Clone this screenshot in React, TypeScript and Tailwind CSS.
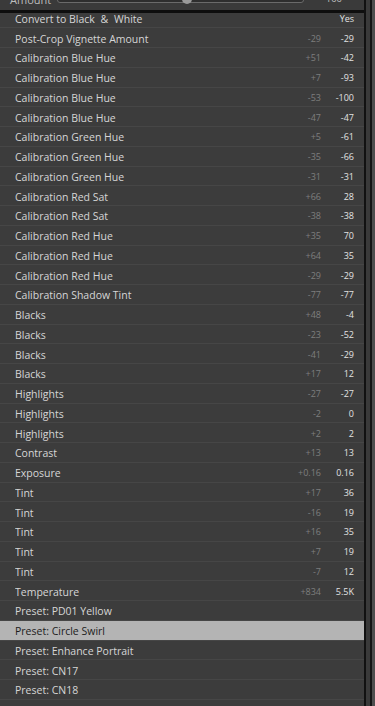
import React from 'react'

type Row = { label: React.ReactNode; delta?: string; value?: string; selected?: boolean }

const rows: Row[] = [
  { label: <>Convert to Black <span className="mx-[3px]">&amp;</span> White</>, value: 'Yes' },
  { label: 'Post-Crop Vignette Amount', delta: '-29', value: '-29' },
  { label: 'Calibration Blue Hue', delta: '+51', value: '-42' },
  { label: 'Calibration Blue Hue', delta: '+7', value: '-93' },
  { label: 'Calibration Blue Hue', delta: '-53', value: '-100' },
  { label: 'Calibration Blue Hue', delta: '-47', value: '-47' },
  { label: 'Calibration Green Hue', delta: '+5', value: '-61' },
  { label: 'Calibration Green Hue', delta: '-35', value: '-66' },
  { label: 'Calibration Green Hue', delta: '-31', value: '-31' },
  { label: 'Calibration Red Sat', delta: '+66', value: '28' },
  { label: 'Calibration Red Sat', delta: '-38', value: '-38' },
  { label: 'Calibration Red Hue', delta: '+35', value: '70' },
  { label: 'Calibration Red Hue', delta: '+64', value: '35' },
  { label: 'Calibration Red Hue', delta: '-29', value: '-29' },
  { label: 'Calibration Shadow Tint', delta: '-77', value: '-77' },
  { label: 'Blacks', delta: '+48', value: '-4' },
  { label: 'Blacks', delta: '-23', value: '-52' },
  { label: 'Blacks', delta: '-41', value: '-29' },
  { label: 'Blacks', delta: '+17', value: '12' },
  { label: 'Highlights', delta: '-27', value: '-27' },
  { label: 'Highlights', delta: '-2', value: '0' },
  { label: 'Highlights', delta: '+2', value: '2' },
  { label: 'Contrast', delta: '+13', value: '13' },
  { label: 'Exposure', delta: '+0.16', value: '0.16' },
  { label: 'Tint', delta: '+17', value: '36' },
  { label: 'Tint', delta: '-16', value: '19' },
  { label: 'Tint', delta: '+16', value: '35' },
  { label: 'Tint', delta: '+7', value: '19' },
  { label: 'Tint', delta: '-7', value: '12' },
  { label: 'Temperature', delta: '+834', value: '5.5K' },
  { label: 'Preset: PD01 Yellow' },
  { label: 'Preset: Circle Swirl', selected: true },
  { label: 'Preset: Enhance Portrait' },
  { label: 'Preset: CN17' },
  { label: 'Preset: CN18' },
  { label: '' },
]

function HistoryRow({ row }: { row: Row }) {
  return (
    <div
      className={`flex h-[19.76px] items-center border-b border-[#464646] pl-[15px] pr-[10px] pt-[2px] ${
        row.selected ? 'bg-[#b4b4b4] text-[#1c1c1c]' : 'text-[#d6d6d6]'
      }`}
    >
      <span className="flex-1 truncate text-[10.5px] leading-[14px]">{row.label}</span>
      {row.delta && (
        <span className="w-[40px] text-right text-[9px] leading-[12px] text-[#7e7e7e]">{row.delta}</span>
      )}
      {row.value && (
        <span className="w-[33px] text-right text-[9px] leading-[12px] text-[#e2e2e2]">{row.value}</span>
      )}
    </div>
  )
}

export default function App() {
  return (
    <div
      className="flex h-[706px] w-[375px] overflow-hidden bg-[#3c3c3c]"
      style={{ fontFamily: '"Open Sans", "Noto Sans", sans-serif' }}
    >
      <div className="flex w-[364px] flex-col">
        {/* Amount slider, scrolled mostly out of view */}
        <div className="h-[10px] overflow-hidden bg-[#3a3a3a]">
          <div className="-mt-[8px] flex h-[14px] items-center pl-[10px] pr-[22px]">
            <span className="w-[47px] text-[11px] leading-none text-[#bdbdbd]">Amount</span>
            <div className="relative h-[8px] flex-1 rounded-[3px] border border-[#6a6a6a] bg-[#2e2e2e]">
              <div className="absolute left-[124px] top-[-3px] h-[11px] w-[10px] rounded-full bg-[#9a9a9a]" />
            </div>
            <span className="w-[38px] text-right text-[9.5px] leading-none text-[#bdbdbd]">100</span>
          </div>
        </div>
        <div className="h-[3px] bg-[#0e0e0e]" />
        <div className="flex-1 overflow-hidden">
          <div className="-mt-[4.5px]">
            {rows.map((r, i) => (
              <HistoryRow key={i} row={r} />
            ))}
          </div>
        </div>
      </div>
      <div className="w-[2px] bg-[#111111]" />
      <div className="w-[4px] bg-[#3a3a3a]" />
      <div className="w-[2px] bg-[#151515]" />
      <div className="w-[3px] bg-[#4e4e4e]" />
    </div>
  )
}
